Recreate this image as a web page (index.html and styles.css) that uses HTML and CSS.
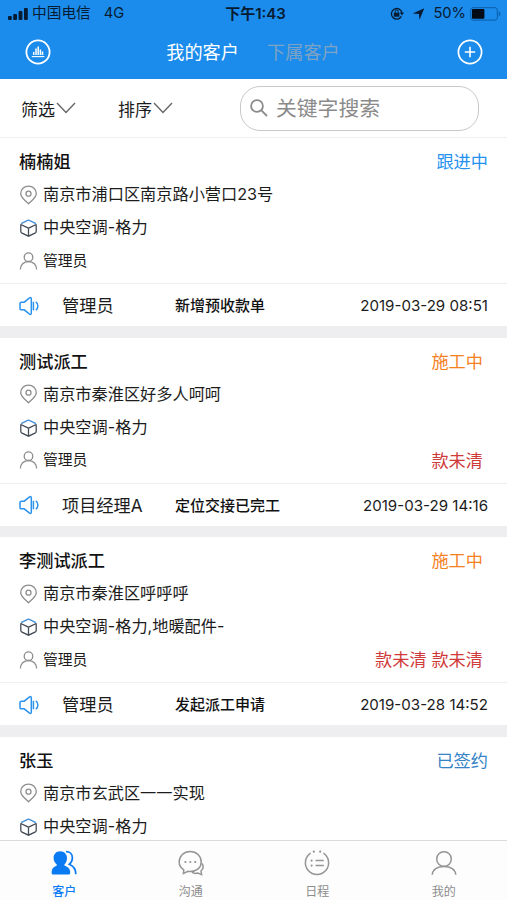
FILE: index.html
```html
<!DOCTYPE html>
<html lang="zh-CN">
<head>
    <meta charset="UTF-8">
    <meta name="viewport" content="width=device-width, initial-scale=1.0">
    <title>我的客户</title>
    <link rel="stylesheet" href="styles.css">
</head>
<body>

    <!-- Shared icons -->
    <svg class="icon-defs" width="0" height="0">
        <symbol id="icon-pin" viewBox="0 0 18 20">
            <path d="M9 18.800C6 15.900 1.200 12.600 1.200 8.500a7.800 7.400 0 0 1 15.600 0c0 4.100-4.800 7.400-7.800 10.300z"/>
            <circle cx="9" cy="8.7" r="2.5"/>
        </symbol>
        <symbol id="icon-cube" viewBox="0 0 18 18">
            <path class="cube-side" d="M1.300 5.200v7.400q0 .8.7 1.200L9 17.200l7-3.400q.7-.4.7-1.200V5.200M9 9.200v8M1.300 5.500L9 9.200l7.700-3.700"/>
            <path class="cube-top" d="M1.600 4.700L8.200 1.300q.8-.4 1.600 0L16.400 4.700"/>
        </symbol>
        <symbol id="icon-user" viewBox="0 0 18 18">
            <circle cx="9" cy="5.2" r="4.3"/>
            <path d="M.9 17.600c0-4.600 3.300-8.100 8.100-8.100s8.100 3.500 8.100 8.100"/>
        </symbol>
        <symbol id="icon-speaker" viewBox="0 0 20 20">
            <path d="M2.400 6.200h2.800L10.500 1.900q1.800-.9 1.800.8v14.600q0 1.700-1.800.8l-5.300-4.300H2.400q-1.400 0-1.400-1.400V7.600q0-1.400 1.400-1.400z"/>
            <path d="M14.400 5.800v8.400M16.800 5.800c2.800 2 2.800 6.400 0 8.400"/>
        </symbol>
        <symbol id="icon-down" viewBox="0 0 20 12">
            <path d="M1 1l9 9.500L19 1"/>
        </symbol>
    </svg>

    <div class="app">
        <header class="header">
            <div class="status-bar">
                <div class="status-left">
                    <svg class="signal" width="20" height="12" viewBox="0 0 20 12">
                        <rect x="0" y="8" width="3.8" height="4" rx="1"/>
                        <rect x="5.2" y="6" width="3.8" height="6" rx="1"/>
                        <rect x="10.6" y="3" width="3.8" height="9" rx="1"/>
                        <rect x="16" y="0" width="3.8" height="12" rx="1"/>
                    </svg>
                    <span class="carrier">中国电信</span>
                    <span class="network">4G</span>
                </div>
                <div class="status-time">下午1:43</div>
                <div class="status-right">
                    <svg class="lock" width="14" height="13" viewBox="0 0 14 13">
                        <path d="M11.400 9.400A5.300 5.300 0 1 1 12 6" fill="none" stroke="#071b33" stroke-width="1.3"/>
                        <path d="M9.800 5.600h4.200l-2.100 2.800z"/>
                        <rect x="3.8" y="5.7" width="5.6" height="4" rx=".5"/>
                        <path d="M5.200 6V4.600a1.500 1.500 0 0 1 3 0V6" fill="none" stroke="#071b33"/>
                    </svg>
                    <svg class="arrow" width="13" height="12" viewBox="0 0 12 12">
                        <path d="M11.800.2L7 11.800 6.400 6 .2 5.400z"/>
                    </svg>
                    <span class="percent">50%</span>
                    <svg class="battery" width="31" height="14" viewBox="0 0 31 14">
                        <rect x=".7" y=".7" width="26.6" height="12.4" rx="2.4" fill="none" stroke="#0c5da8"/>
                        <rect x="2" y="2" width="12.4" height="9.8" rx="1" fill="#020b16"/>
                        <path d="M28.800 4.600q1.600.8 1.600 2.300t-1.600 2.300z" fill="#0c5da8"/>
                    </svg>
                </div>
            </div>
            <nav class="nav-bar">
                <svg class="nav-icon" width="26" height="26" viewBox="0 0 26 26">
                    <circle cx="13" cy="13" r="11.6" stroke-width="1.8"/>
                    <path d="M6.800 17.600h12.600" stroke-width="1.1"/>
                    <path d="M8.700 16v-3M11 16V9.500M13.200 16V7.600M15.400 16v-5.500M17.500 16v-3.600" stroke-width="1.5"/>
                </svg>
                <div class="nav-tabs">
                    <span class="nav-tab active">我的客户</span>
                    <span class="nav-tab">下属客户</span>
                </div>
                <svg class="nav-icon" width="26" height="26" viewBox="0 0 26 26">
                    <circle cx="13" cy="13" r="11.6" stroke-width="1.7"/>
                    <path d="M7.800 13h10.400M13 7.800v10.400" stroke-width="1.6"/>
                </svg>
            </nav>
        </header>

        <div class="filter-bar">
            <div class="filter">筛选<svg class="down"><use href="#icon-down"/></svg></div>
            <div class="filter">排序<svg class="down"><use href="#icon-down"/></svg></div>
            <div class="search">
                <svg class="search-icon" width="18" height="18" viewBox="0 0 18 18">
                    <circle cx="7" cy="7" r="5.9"/>
                    <path d="M11.400 11.400l5.600 5.600"/>
                </svg>
                <span>关键字搜索</span>
            </div>
        </div>

        <main class="list">
            <section class="card">
                <div class="card-body">
                    <div class="row"><span class="name">楠楠姐</span><span class="state following">跟进中</span></div>
                    <div class="row"><svg class="icon pin"><use href="#icon-pin"/></svg><span class="text">南京市浦口区南京路小营口23号</span></div>
                    <div class="row"><svg class="icon cube"><use href="#icon-cube"/></svg><span class="text">中央空调-格力</span></div>
                    <div class="row"><svg class="icon user"><use href="#icon-user"/></svg><span class="text small">管理员</span></div>
                </div>
                <div class="card-footer">
                    <svg class="speaker"><use href="#icon-speaker"/></svg>
                    <span class="operator">管理员</span>
                    <span class="action">新增预收款单</span>
                    <span class="date">2019-03-29 08:51</span>
                </div>
            </section>

            <section class="card">
                <div class="card-body">
                    <div class="row"><span class="name">测试派工</span><span class="state working">施工中</span></div>
                    <div class="row"><svg class="icon pin"><use href="#icon-pin"/></svg><span class="text">南京市秦淮区好多人呵呵</span></div>
                    <div class="row"><svg class="icon cube"><use href="#icon-cube"/></svg><span class="text">中央空调-格力</span></div>
                    <div class="row"><svg class="icon user"><use href="#icon-user"/></svg><span class="text small">管理员</span><span class="state unpaid">款未清</span></div>
                </div>
                <div class="card-footer">
                    <svg class="speaker"><use href="#icon-speaker"/></svg>
                    <span class="operator">项目经理A</span>
                    <span class="action">定位交接已完工</span>
                    <span class="date">2019-03-29 14:16</span>
                </div>
            </section>

            <section class="card">
                <div class="card-body">
                    <div class="row"><span class="name">李测试派工</span><span class="state working">施工中</span></div>
                    <div class="row"><svg class="icon pin"><use href="#icon-pin"/></svg><span class="text">南京市秦淮区呼呼呼</span></div>
                    <div class="row"><svg class="icon cube"><use href="#icon-cube"/></svg><span class="text">中央空调-格力,地暖配件-</span></div>
                    <div class="row"><svg class="icon user"><use href="#icon-user"/></svg><span class="text small">管理员</span><span class="state unpaid">款未清 款未清</span></div>
                </div>
                <div class="card-footer">
                    <svg class="speaker"><use href="#icon-speaker"/></svg>
                    <span class="operator">管理员</span>
                    <span class="action">发起派工申请</span>
                    <span class="date">2019-03-28 14:52</span>
                </div>
            </section>

            <section class="card">
                <div class="card-body">
                    <div class="row"><span class="name">张玉</span><span class="state signed">已签约</span></div>
                    <div class="row"><svg class="icon pin"><use href="#icon-pin"/></svg><span class="text">南京市玄武区一一实现</span></div>
                    <div class="row"><svg class="icon cube"><use href="#icon-cube"/></svg><span class="text">中央空调-格力</span></div>
                </div>
            </section>
        </main>

        <footer class="tab-bar">
            <div class="tab active">
                <svg width="26" height="26" viewBox="0 0 26 26">
                    <path d="M9.200 1.200c4 0 6.800 2.800 6.800 6.800 0 2.800-1 5-2.600 6.400v1c3.600 1.400 5.800 3.200 5.800 6.800 0 1.600-.4 2.400-1.600 2.400H2.200C1 24.600.6 23.800.6 22.200c0-3.600 1.800-5.400 5.200-6.800v-1C4 13 2.600 10.800 2.600 8c0-4 2.600-6.800 6.600-6.800z" fill="#0b7bf4"/>
                    <path d="M15 1.600c4 0 6.400 2.600 6.400 6.300 0 2.800-1.200 4.700-3.200 6.400 4 1.500 6.600 4.400 6.600 10" fill="none" stroke="#0b7bf4" stroke-width="1.700"/>
                </svg>
                <span>客户</span>
            </div>
            <div class="tab">
                <svg width="26" height="26" viewBox="0 0 26 26">
                    <path d="M5.800 19.800C3 18 1.200 15.200 1.200 11.900 1.200 6 6 1.500 12.200 1.500S23.200 6 23.200 11.900 18.600 21.400 12.200 21.400q-1.200 0-2.200-.2L5.400 23.400z"/>
                    <path d="M24 13.400c1.800 3 1 6-1 7.600l.6 3.600-3.800-1.600c-2.600.8-4.400.3-5.800-.8"/>
                    <path class="dots" d="M7.400 12h.01M12.300 12h.01M17.200 12h.01"/>
                </svg>
                <span>沟通</span>
            </div>
            <div class="tab">
                <svg width="26" height="26" viewBox="0 0 26 26">
                    <path d="M6.600 3.200a11.600 11.600 0 1 0 12.800 0"/>
                    <path d="M11.600 10.600h8.200M11.600 15.600h8.200"/>
                    <path class="dots" d="M9.800 1.700h.01M16.200 1.700h.01M7.600 10.600h.01M7.600 15.600h.01"/>
                </svg>
                <span>日程</span>
            </div>
            <div class="tab">
                <svg width="26" height="26" viewBox="0 0 26 26">
                    <circle cx="13" cy="9" r="7.300"/>
                    <path d="M1.200 24.800c.4-5 5-8.400 11.800-8.400s11.400 3.400 11.800 8.400"/>
                </svg>
                <span>我的</span>
            </div>
        </footer>
    </div>

</body>
</html>
```

FILE: styles.css
```css
* {
    box-sizing: border-box;
}

body {
    margin: 0;
    background-color: #fff;
    color: #1c1c1c;
    font-family: Inter, "Noto Sans CJK SC", sans-serif;
}

svg {
    display: block;
    flex: none;
}

.icon-defs {
    position: absolute;
}

.app {
    display: flex;
    flex-direction: column;
    height: 900px;
    overflow: hidden;
    white-space: nowrap;
}

/* Header */
.header {
    flex: none;
    height: 79px;
    background-color: #1b8ceb;
}

.status-bar {
    display: grid;
    grid-template-columns: 1fr auto 1fr;
    align-items: center;
    height: 27px;
    padding: 0 6px 0 8px;
    color: #071b33;
    font-size: 14.7px;
    line-height: 27px;
}

.status-bar svg {
    fill: #071b33;
}

.status-left,
.status-right {
    display: flex;
    align-items: center;
}

.status-right {
    justify-content: flex-end;
}

.carrier {
    margin-left: 4px;
}

.network {
    margin-left: 13px;
}

.status-time {
    padding-left: 2px;
    font-size: 15px;
    font-weight: 600;
}

.arrow {
    margin-left: 8px;
}

.percent {
    margin-left: 8px;
}

.battery {
    margin-left: 4px;
}

.nav-bar {
    display: flex;
    align-items: center;
    justify-content: space-between;
    height: 50px;
    padding: 0 24px 0 25px;
}

.nav-icon {
    fill: none;
    stroke: #fff;
}

.nav-tabs {
    display: flex;
    gap: 28px;
    margin-right: 2px;
}

.nav-tab {
    color: #7fa3c4;
    font-size: 18.2px;
    line-height: 51px;
}

.nav-tab.active {
    color: #fff;
}

/* Filters and search */
.filter-bar {
    display: flex;
    flex: none;
    align-items: center;
    height: 59px;
    padding: 0 28px 0 21px;
    border-bottom: 1px solid #efeff1;
}

.filter {
    display: flex;
    align-items: center;
    width: 97px;
    font-size: 17px;
}

.down {
    width: 20px;
    height: 12px;
    margin-left: 1px;
    fill: none;
    stroke: #666;
    stroke-width: 1.4;
}

.search {
    display: flex;
    align-items: center;
    width: 239px;
    height: 45px;
    margin-left: auto;
    padding-left: 9px;
    border: 1px solid #c8c8c8;
    border-radius: 20px;
    color: #8a8a8a;
    font-size: 20.8px;
    line-height: 43px;
}

.search-icon {
    margin-right: 8px;
    fill: none;
    stroke: #8a8a8a;
    stroke-width: 1.8;
}

/* Customer list */
.list {
    flex: 1;
    min-height: 0;
    overflow: hidden;
    background-color: #eeeef1;
}

.card {
    margin-bottom: 11.6px;
    background-color: #fff;
}

.card-body {
    height: 145px;
    padding: 7px 19px 0;
}

.row {
    display: flex;
    align-items: center;
    height: 33px;
    line-height: 33px;
}

.name {
    color: #111;
    font-size: 17.2px;
    font-weight: 500;
}

.icon {
    width: 19px;
    height: 18px;
    margin-right: 5px;
    fill: none;
    stroke: #8e8e8e;
    stroke-width: 1.3;
}

.pin {
    height: 20px;
}

.cube {
    margin-top: 1px;
}

.cube-side {
    stroke: #444c55;
}

.cube-top {
    stroke: #3f8fdc;
}

.text {
    font-size: 16.2px;
}

.text.small {
    padding-top: 1px;
    font-size: 14.8px;
}

.state {
    margin-left: auto;
    font-size: 17.2px;
}

.following {
    color: #2592f0;
}

.working,
.unpaid {
    margin-right: 5px;
}

.working {
    color: #f5821f;
}

.unpaid {
    color: #cf3a3a;
}

.signed {
    color: #3683c5;
}

.card-footer {
    display: grid;
    grid-template-columns: 43px 113px 1fr auto;
    align-items: center;
    height: 43px;
    padding: 0 19px;
    border-top: 1px solid #efeff1;
    line-height: 43px;
}

.speaker {
    width: 20px;
    height: 20px;
    fill: none;
    stroke: #2b93ee;
    stroke-width: 1.5;
}

.operator {
    font-size: 17.2px;
}

.action {
    color: #111;
    font-size: 15px;
    font-weight: 500;
}

.date {
    font-size: 15.1px;
}

/* Bottom tabs */
.tab-bar {
    display: grid;
    flex: none;
    grid-template-columns: repeat(4, 1fr);
    height: 60px;
    padding-left: 1px;
    border-top: 1px solid #dcdcdc;
    background-color: #fdfdfd;
}

.tab {
    display: flex;
    flex-direction: column;
    align-items: center;
    padding-top: 9px;
    color: #8c8c8c;
    font-size: 12px;
    line-height: 16px;
}

.tab svg {
    margin-bottom: 8px;
    fill: none;
    stroke: #959595;
    stroke-width: 1.5;
}

.tab .dots {
    stroke-linecap: round;
    stroke-width: 2.2;
}

.tab.active {
    color: #0b7bf4;
    font-weight: 500;
}

.tab.active svg {
    stroke: none;
}
```
